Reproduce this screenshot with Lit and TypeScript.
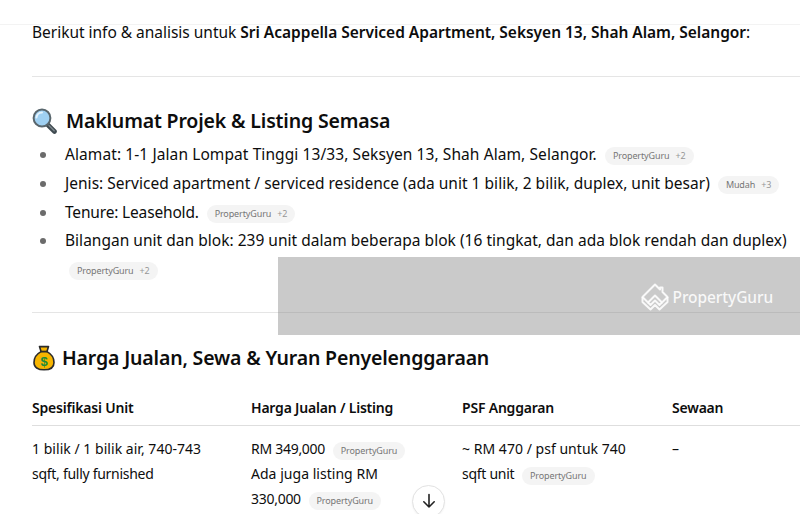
import { LitElement, html, css } from "lit";
import { customElement } from "lit/decorators.js";

const chip = (name: string, extra = "") =>
  html`<span class="chip">${name}${extra ? html`<span class="more">${extra}</span>` : ""}</span>`;

const magnifier = html`<svg class="emoji mag" viewBox="0 0 26 26" aria-hidden="true">
  <path d="M15.5 16.5 L22.5 23.5" stroke="#3f4a50" stroke-width="4.6" stroke-linecap="round"/>
  <path d="M17 17.6 L22.2 22.8" stroke="#7b868c" stroke-width="1.4" stroke-linecap="round"/>
  <circle cx="10" cy="10" r="8.4" fill="#9fd0f2" stroke="#59666d" stroke-width="2"/>
  <path d="M4.5 9.5 A5.6 5.6 0 0 1 10 4.4" fill="none" stroke="#e4f3fd" stroke-width="2" stroke-linecap="round"/>
</svg>`;

const bag = html`<svg class="emoji bag" viewBox="0 0 22 26" aria-hidden="true">
  <path d="M6.5 1.6 H15.5 L14 6.6 C18.4 9 21 13 21 17.4 C21 22.4 17 24.8 11 24.8 C5 24.8 1 22.4 1 17.4 C1 13 3.6 9 8 6.6 Z" fill="#f7b500" stroke="#2b2b2b" stroke-width="1.6" stroke-linejoin="round"/>
  <path d="M7.6 6.6 H14.4" stroke="#2b2b2b" stroke-width="1.8"/>
  <text x="11" y="20.5" text-anchor="middle" class="dollar">$</text>
</svg>`;

@customElement("app-root")
export class AppRoot extends LitElement {
  static styles = css`
    :host {
      display: block;
      width: 800px;
      height: 514px;
      overflow: hidden;
      position: relative;
      background: #fff;
      color: #0d0d0d;
      font-family: "Noto Sans", "Open Sans", sans-serif;
      font-size: 15.5px;
    }
    .topline {
      height: 25px;
      border-bottom: 1px solid #f3f3f3;
      box-sizing: border-box;
    }
    .content {
      padding: 0 0 0 32px;
    }
    p {
      margin: 0;
      line-height: 15px;
      white-space: nowrap;
      letter-spacing: -0.02px;
    }
    strong { font-weight: 600; }
    hr {
      border: none;
      border-top: 1px solid #e5e5e5;
      margin: 0;
    }
    .hr1 { margin-top: 36px; }
    .hr2 { margin-top: 28px; }
    h3 {
      margin: 0;
      font-size: 19.5px;
      font-weight: 600;
      line-height: 28px;
      display: flex;
      align-items: center;
      letter-spacing: -0.16px;
      white-space: nowrap;
    }
    .h1 { margin-top: 30px; gap: 8px; }
    .h2 { margin-top: 31px; gap: 7px; }
    .emoji { flex: none; display: block; }
    .mag { width: 26px; height: 26px; }
    .bag { width: 22px; height: 26px; margin-left: 1px; }
    .dollar {
      font-size: 13px;
      font-weight: 700;
      fill: #1a8a3a;
      font-family: "Liberation Sans", sans-serif;
    }
    ul {
      margin: 5px 0 0;
      padding: 0;
      list-style: none;
      letter-spacing: 0.02px;
    }
    li {
      position: relative;
      padding-left: 33px;
      line-height: 28.8px;
      width: 768px;
      box-sizing: border-box;
    }
    li.wide { letter-spacing: 0.09px; }
    li.tight { letter-spacing: -0.17px; }
    li::before {
      content: "";
      position: absolute;
      left: 8px;
      top: 12px;
      width: 6px;
      height: 6px;
      border-radius: 50%;
      background: #6b6b6b;
    }
    .chip {
      display: inline-flex;
      align-items: center;
      height: 18px;
      padding: 0 8px;
      margin-left: 4px;
      border-radius: 9px;
      background: #f4f4f4;
      color: #767676;
      font-size: 9px;
      line-height: 18px;
      letter-spacing: -0.12px;
      vertical-align: 1px;
      white-space: nowrap;
    }
    .more { margin-left: 6px; color: #979797; }
    .table {
      margin-top: 26px;
      font-size: 14px;
    }
    .row {
      display: grid;
      grid-template-columns: 219px 211px 210px 96px;
    }
    .head {
      font-weight: 600;
      line-height: 20px;
      padding-bottom: 7px;
      border-bottom: 1px solid #dedede;
      width: 768px;
      letter-spacing: -0.2px;
    }
    .body {
      padding-top: 10px;
      line-height: 25px;
      letter-spacing: 0.03px;
    }
    .cell { padding-right: 32px; }
    .narrow { letter-spacing: -0.28px; }
    .body .chip { margin-left: 4px; vertical-align: 0; }
    .watermark {
      position: absolute;
      left: 278px;
      top: 257px;
      width: 522px;
      height: 78px;
      background: rgba(128, 128, 128, 0.42);
      display: flex;
      align-items: center;
      justify-content: flex-end;
      gap: 4px;
      padding: 2px 27px 0 0;
      box-sizing: border-box;
      color: rgba(255, 255, 255, 0.88);
      font-size: 15.5px;
      font-weight: 500;
      letter-spacing: -0.1px;
    }
    .wm-logo { width: 28px; height: 28px; display: block; }
    .down {
      position: absolute;
      left: 412px;
      top: 485px;
      width: 33px;
      height: 33px;
      box-sizing: border-box;
      border-radius: 50%;
      border: 1px solid #e2e2e2;
      background: #fff;
      display: flex;
      align-items: center;
      justify-content: center;
      padding: 0;
      box-shadow: 0 1px 2px rgba(0,0,0,0.05);
    }
    .down svg { width: 18px; height: 18px; display: block; margin-top: -1px; }
  `;

  render() {
    return html`
      <div class="topline"></div>
      <div class="content">
        <p>Berikut info &amp; analisis untuk <strong>Sri Acappella Serviced Apartment, Seksyen 13, Shah Alam, Selangor</strong>:</p>
        <hr class="hr1" />
        <h3 class="h1">${magnifier}<span>Maklumat Projek &amp; Listing Semasa</span></h3>
        <ul>
          <li class="wide">Alamat: 1-1 Jalan Lompat Tinggi 13/33, Seksyen 13, Shah Alam, Selangor. ${chip("PropertyGuru", "+2")}</li>
          <li>Jenis: Serviced apartment / serviced residence (ada unit 1 bilik, 2 bilik, duplex, unit besar) ${chip("Mudah", "+3")}</li>
          <li class="tight">Tenure: Leasehold. ${chip("PropertyGuru", "+2")}</li>
          <li>Bilangan unit dan blok: 239 unit dalam beberapa blok (16 tingkat, dan ada blok rendah dan duplex) ${chip("PropertyGuru", "+2")}</li>
        </ul>
        <hr class="hr2" />
        <h3 class="h2">${bag}<span>Harga Jualan, Sewa &amp; Yuran Penyelenggaraan</span></h3>
        <div class="table">
          <div class="row head">
            <div>Spesifikasi Unit</div>
            <div>Harga Jualan / Listing</div>
            <div>PSF Anggaran</div>
            <div>Sewaan</div>
          </div>
          <div class="row body">
            <div class="cell">1 bilik / 1 bilik air, 740-743 <span class="narrow">sqft, fully furnished</span></div>
            <div class="cell"><span class="narrow">RM 349,000</span> ${chip("PropertyGuru")}<br />Ada juga listing RM <span class="narrow">330,000</span> ${chip("PropertyGuru")}</div>
            <div class="cell">~ RM 470 / psf untuk 740 <span class="narrow">sqft unit</span> ${chip("PropertyGuru")}</div>
            <div class="cell">–</div>
          </div>
        </div>
      </div>
      <div class="watermark">
        <svg class="wm-logo" viewBox="0 0 28 28" fill="none" stroke="currentColor" stroke-width="2" stroke-linejoin="round" aria-hidden="true">
          <path d="M14 1.5 L19 6.5 V4.5 H21.5 V9 L26.5 14 L21 19.5 L14 12.5 L7 19.5 L1.5 14 Z"/>
          <path d="M1.5 14 L1.5 19 L9.5 26.5 L14 22 L18.5 26.5 L26.5 19 L26.5 14"/>
          <path d="M7 19.5 L9.5 22 L14 17.5 L18.5 22 L21 19.5"/>
        </svg>
        <span>PropertyGuru</span>
      </div>
      <button class="down" aria-label="Scroll down">
        <svg viewBox="0 0 18 18" fill="none" stroke="#222" stroke-width="1.6" stroke-linecap="round" stroke-linejoin="round">
          <path d="M9 2.5 V15 M3.8 9.8 L9 15 L14.2 9.8"/>
        </svg>
      </button>
    `;
  }
}
